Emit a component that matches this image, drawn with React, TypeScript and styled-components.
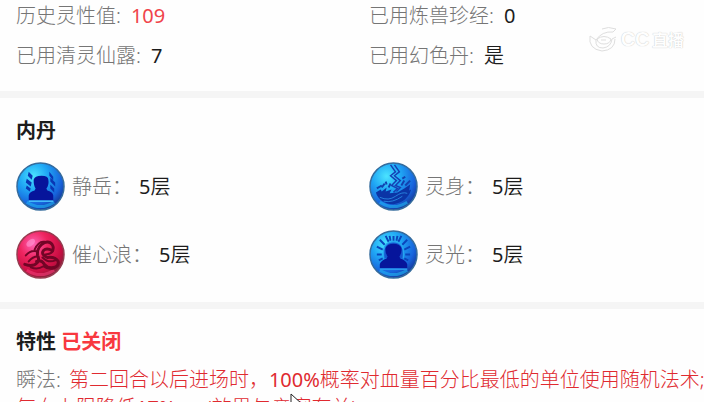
import React from "react";
import styled, { createGlobalStyle } from "styled-components";

const Global = createGlobalStyle`
  * { box-sizing: border-box; }
  body {
    margin: 0;
    background: #fefefe;
    color: #1c1c1c;
    font: 350 20px/40px "Noto Sans", "Noto Sans CJK SC", sans-serif;
  }
  dl, dt, dd, h2, p { margin: 0; }
`;

const Page = styled.main`
  position: relative;
  height: 100vh;
  overflow: hidden;
`;

const Section = styled.section`
  display: flow-root;
  padding: 13px 0 23px 16px;
  border-bottom: 7px solid #f5f5f5;
`;

const StatsSection = styled(Section)`
  padding: 0 0 15px 16px;
`;

const Stats = styled.dl`
  display: grid;
  grid-template-columns: 1fr 1fr;
  column-gap: 18px;
  margin-top: -4px;
`;

const Stat = styled.div`
  display: flex;
  gap: 10px;
`;

const Label = styled.dt`
  font-weight: 300;
  color: #757575;
`;

const Value = styled.dd<{ $alert?: boolean }>`
  color: ${(p) => (p.$alert ? "#f0444a" : "#1c1c1c")};
`;

const Digits = styled.span`
  font-weight: 400;
`;

const Title = styled.h2`
  font-size: 20px;
  font-weight: 700;
`;

const Closed = styled.span`
  color: #f8383e;
`;

const Pills = styled.dl`
  display: grid;
  grid-template-columns: 1fr 1fr;
  gap: 19px 18px;
  margin-top: 11px;
`;

const Pill = styled.div`
  display: flex;
  align-items: center;
  gap: 7px;
`;

const Orb = styled.svg`
  width: 49px;
  height: 49px;
  flex: none;
`;

const Trait = styled.p`
  margin-top: 4px;
  line-height: 28px;
  font-weight: 300;
  white-space: nowrap;
  color: #e02a30;
`;

const TraitLabel = styled.span`
  margin-right: 8px;
  color: #757575;
`;

const Watermark = styled.div`
  position: absolute;
  top: 24px;
  right: 20px;
  display: flex;
  align-items: center;
  gap: 3px;
  font: 700 20px/30px "Liberation Sans", "Noto Sans CJK SC", sans-serif;
  color: #fefefe;
  text-shadow: 0 0 1px #b4b4b4;
`;

const WatermarkSmall = styled.span`
  margin-left: -2px;
  font-size: 16px;
`;

const Pointer = styled.svg`
  position: absolute;
  left: 290px;
  top: 393px;
`;

type Emblem = "guard" | "bolt" | "wave" | "halo";

const emblems: Record<Emblem, React.ReactNode> = {
  guard: (
    <>
      <g fill="#0a36b4">
        <path d="M13 10l4 4-1 4-4-4z M11 17l5 4-1 4-5-4z M11 24l4 3-1 3-4-3z" />
        <path d="M34 10l4 5v4l-4-5z M35 16l5 5v4l-5-5z M35 23l4 4v4l-4-4z" />
      </g>
      <path
        d="M13 39v-5q1-4 6-5l1-2q-2-3-2-9 1-4 8-4t7 4q1 5-2 9l1 2q5 1 6 5v5z"
        fill="#06159b"
      />
      <path d="M13 40h25" stroke="#48c0fa" strokeWidth="1.500" />
    </>
  ),
  bolt: (
    <>
      <path d="M7 31l5-3 1 2 5-4-1 4 6-2-2 4 8-1 7-4 6-4-1 6 2-1c-2 8-9 14-18 15C16 43 9 38 7 31z" fill="#0b35a6" />
      <path d="M11 36q9 4 16-1t12-3M15 40q9 2 19-5" fill="none" stroke="#2680dc" strokeWidth="1" />
      <path d="M8 27l5-3M13 26l3-4M18 23l-1-3M20 26l2-4M33 24l3-5M37 24l5-5M34 17l3-2" stroke="#1242b0" strokeWidth="2" />
      <path d="M22 3l5 7-5 4 6 5-5 5 6 3-4 4" fill="none" stroke="#1540b4" strokeWidth="1.500" />
      <path d="M26 3l5 7-5 4 6 5-5 5 5 2-4 4" fill="none" stroke="#1540b4" strokeWidth="1.500" />
    </>
  ),
  wave: (
    <g fill="none" stroke="#720526" strokeLinecap="round">
      <path d="M9 35q9 3 13-2 2-4 0-7-1-9 7-13 5-2 8 2 2 3 0 6-6-3-9 0-3 4 4 7 8-1 11 4 1 4-3 6-7 2-11-3-3-5-8-3" strokeWidth="3" />
      <path d="M10 26q5-6 12-4M19 20q4-9 10-8M13 32q4-5 9-5M15 38q7 3 13-1 5 4 11 2M27 28q6 6 13 3M30 25q7-1 8-4" strokeWidth="2" />
    </g>
  ),
  halo: (
    <>
      <path
        d="M25 11V6M20 12l-3-6M30 12l3-6M16 15l-5-5M34 15l5-5M14 20l-6-3M36 20l6-3M13 25H8M37 25h5M22 11l-1-5M28 11l1-5M14 29l-4 2M36 29l4 2"
        stroke="#0a45bc"
        strokeWidth="2"
      />
      <path d="M15 29q-2-17 10-17t10 17" fill="#1558d0" stroke="#25a5ef" strokeWidth="1.500" />
      <path
        d="M11 39v-4q1-4 7-6l1-2q-3-4-2-9 2-4 8-4t8 4q1 5-2 9l1 2q6 2 7 6v4z"
        fill="#06159b"
      />
      <path d="M11 40h28" stroke="#2c9df0" strokeWidth="1.500" />
    </>
  ),
};

function OrbIcon({ kind }: { kind: Emblem }) {
  const red = kind === "wave";
  const id = `orb-${kind}`;
  return (
    <Orb viewBox="0 0 50 50" aria-hidden="true">
      <defs>
        <radialGradient id={id} cx="0.350" cy="0.280" r="0.750">
          <stop offset="0" stopColor={red ? "#ff62b4" : "#4be4ff"} />
          <stop offset="0.400" stopColor={red ? "#ee245f" : "#20a8f5"} />
          <stop offset="0.800" stopColor={red ? "#c80d42" : "#1763dc"} />
          <stop offset="1" stopColor={red ? "#85213a" : "#153c9f"} />
        </radialGradient>
      </defs>
      <circle cx="25" cy="25" r="24" fill={`url(#${id})`} stroke={red ? "#963c50" : "#356c9d"} strokeWidth="1.500" />
      <path
        d="M11 41q14 9 28 0"
        fill="none"
        stroke={red ? "#f43c78" : "#22b8f5"}
        strokeWidth="3"
        opacity="0.600"
      />
      {emblems[kind]}
      {red && <ellipse cx="15" cy="13" rx="5" ry="3" fill="#ff9ad6" opacity="0.600" transform="rotate(-40 15 13)" />}
    </Orb>
  );
}

const stats = [
  { label: "历史灵性值", digits: "109", alert: true },
  { label: "已用炼兽珍经", digits: "0" },
  { label: "已用清灵仙露", digits: "7" },
  { label: "已用幻色丹", text: "是" },
];

const pills: { name: string; level: number; kind: Emblem }[] = [
  { name: "静岳", level: 5, kind: "guard" },
  { name: "灵身", level: 5, kind: "bolt" },
  { name: "催心浪", level: 5, kind: "wave" },
  { name: "灵光", level: 5, kind: "halo" },
];

export default function App() {
  return (
    <>
      <Global />
      <Page>
        <StatsSection>
          <Stats>
            {stats.map((s) => (
              <Stat key={s.label}>
                <Label>{s.label}:</Label>
                <Value $alert={s.alert}>{s.digits ? <Digits>{s.digits}</Digits> : s.text}</Value>
              </Stat>
            ))}
          </Stats>
        </StatsSection>
        <Section>
          <Title>内丹</Title>
          <Pills>
            {pills.map((p) => (
              <Pill key={p.name}>
                <OrbIcon kind={p.kind} />
                <Label>{p.name}：</Label>
                <Value>
                  <Digits>{p.level}</Digits>层
                </Value>
              </Pill>
            ))}
          </Pills>
        </Section>
        <Section>
          <Title>
            特性 <Closed>已关闭</Closed>
          </Title>
          <Trait>
            <TraitLabel>瞬法:</TraitLabel>
            第二回合以后进场时，<Digits>100%</Digits>概率对血量百分比最低的单位使用随机法术;
            <br />
            气血上限降低<Digits>17%</Digits>。&nbsp; (效果与亲密有关)
          </Trait>
        </Section>
        <Watermark>
          <svg width="30" height="28" viewBox="0 0 30 28" fill="none" stroke="#dedede" aria-hidden="true">
            <path d="M2 10q-2 13 12 15 13-1 13-12M2 10l6 4q6-9 17-8l3-3q-8-3-14 0M8 14q-1 8 7 8 8-1 9-9l4-2" />
            <path d="M9 13q7-5 14 0-1 5-7 5t-7-5zM13 14h5" />
          </svg>
          <span>
            CC<WatermarkSmall> 直播</WatermarkSmall>
          </span>
        </Watermark>
        <Pointer width="12" height="19" viewBox="0 0 12 19" aria-hidden="true">
          <path d="M1 1v15l4-4 3 6 2-1-3-6h5z" fill="#fff" stroke="#222" />
        </Pointer>
      </Page>
    </>
  );
}
